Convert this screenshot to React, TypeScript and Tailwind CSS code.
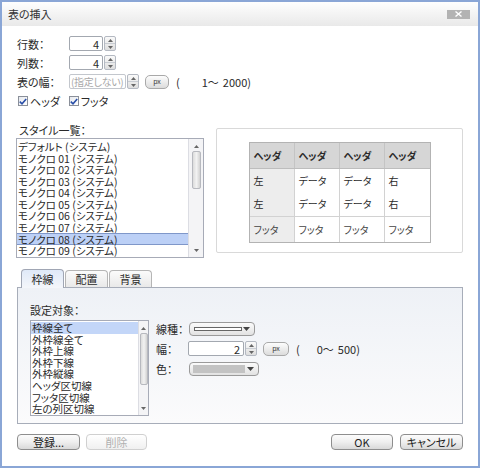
import React from "react";

const Tri = ({ down }: { down?: boolean }) => (
  <svg width="5" height="3" viewBox="0 0 5 3">
    <path d={down ? "M0 0H5L2.5 3z" : "M2.5 0L5 3H0z"} fill="#666" />
  </svg>
);

const Arrow = () => (
  <svg width="7" height="4" viewBox="0 0 7 4">
    <path d="M0 0H7L3.5 4z" fill="#444" />
  </svg>
);

function SpinButtons() {
  return (
    <div className="ml-px flex w-[12px] flex-col overflow-hidden rounded-[2px] border border-[#b4b9c2] bg-gradient-to-b from-[#fafafa] to-[#dedede]">
      <div className="flex flex-1 items-center justify-center border-b border-[#c8ccd2]">
        <Tri />
      </div>
      <div className="flex flex-1 items-center justify-center">
        <Tri down />
      </div>
    </div>
  );
}

function PxButton({ w }: { w: string }) {
  return (
    <div
      className={`flex h-[14px] items-center justify-center rounded-[5px] border border-[#a9a9a9] bg-gradient-to-b from-[#fdfdfd] to-[#dcdcdc] text-[7px] leading-none text-[#333] ${w}`}
    >
      px
    </div>
  );
}

function Check({ label }: { label: string }) {
  return (
    <div className="flex items-center">
      <div className="flex h-[10px] w-[10px] items-center justify-center border border-[#8a8f99] bg-gradient-to-br from-[#e6e9ee] to-white">
        <svg width="8" height="7" viewBox="0 0 8 7">
          <path d="M0.8 3.6L3 5.8L7.2 1" stroke="#2a4fa8" strokeWidth="1.6" fill="none" />
        </svg>
      </div>
      <span className="ml-[2px]">{label}</span>
    </div>
  );
}

function Scrollbar({ w, thumbTop, thumbH, thumbW }: { w: string; thumbTop: string; thumbH: string; thumbW: string }) {
  return (
    <div className={`flex flex-col items-center border-l border-[#dcdde3] bg-[#f4f4f6] ${w}`}>
      <div className="mt-[4px] flex h-[6px] items-center">
        <Tri />
      </div>
      <div
        className={`rounded-[2px] border border-[#b7b9bf] bg-gradient-to-r from-[#dcdcdc] via-[#f2f2f2] to-[#d2d2d2] ${thumbTop} ${thumbH} ${thumbW}`}
      />
      <div className="flex-1" />
      <div className="mb-[4px] flex h-[6px] items-center">
        <Tri down />
      </div>
    </div>
  );
}

function Btn({ label, disabled, w }: { label: string; disabled?: boolean; w: string }) {
  return (
    <div
      className={`flex h-[16px] items-center justify-center rounded-[4px] border ${
        disabled
          ? "border-[#d0d0d0] bg-gradient-to-b from-white to-[#f0f0f0] text-[#b0b0b0]"
          : "border-[#8e8e8e] bg-gradient-to-b from-[#fcfcfc] via-[#efefef] to-[#d9d9d9] text-[#222]"
      } ${w}`}
    >
      {label}
    </div>
  );
}

const styles = [
  "デフォルト (システム)",
  "モノクロ 01 (システム)",
  "モノクロ 02 (システム)",
  "モノクロ 03 (システム)",
  "モノクロ 04 (システム)",
  "モノクロ 05 (システム)",
  "モノクロ 06 (システム)",
  "モノクロ 07 (システム)",
  "モノクロ 08 (システム)",
  "モノクロ 09 (システム)",
];

const targets = ["枠線全て", "外枠線全て", "外枠上線", "外枠下線", "外枠縦線", "ヘッダ区切線", "フッタ区切線", "左の列区切線"];

export default function App() {
  return (
    <div className="flex h-[468px] w-[480px] flex-col overflow-hidden border-2 border-[#8aa6d6] bg-white font-['Noto_Sans_CJK_JP',sans-serif] text-[11px] leading-[12px] text-[#2a2a2a] [font-feature-settings:'palt']">
      {/* title bar */}
      <div className="flex h-[24px] items-center justify-between bg-gradient-to-b from-[#fefefe] to-[#e9e9e9] pl-[6px] pr-[8px]">
        <span className="text-[#333]">表の挿入</span>
        <div className="flex h-[9px] w-[23px] items-center justify-center bg-[#b3b3b3]">
          <svg width="7" height="6" viewBox="0 0 7 6">
            <path d="M0.5 0.5L6.5 5.5M6.5 0.5L0.5 5.5" stroke="white" strokeWidth="1.4" />
          </svg>
        </div>
      </div>

      {/* body */}
      <div className="flex flex-1 flex-col px-[15px] pt-[10px]">
        {/* rows */}
        <div className="flex flex-col gap-[4px]">
          <div className="flex h-[15px] items-center">
            <span className="w-[52px]">行数：</span>
            <div className="flex h-[15px]">
              <div className="flex w-[34px] items-center justify-end rounded-[2px] border border-[#a3a8b0] bg-white pr-[3px]">4</div>
              <SpinButtons />
            </div>
          </div>
          <div className="flex h-[15px] items-center">
            <span className="w-[52px]">列数：</span>
            <div className="flex h-[15px]">
              <div className="flex w-[34px] items-center justify-end rounded-[2px] border border-[#a3a8b0] bg-white pr-[3px]">4</div>
              <SpinButtons />
            </div>
          </div>
          <div className="flex h-[15px] items-center">
            <span className="w-[52px]">表の幅：</span>
            <div className="flex h-[15px]">
              <div className="flex w-[57px] items-center overflow-hidden whitespace-nowrap rounded-[2px] border border-[#c3c7cd] bg-white pl-px text-[10px] tracking-[-0.3px] text-[#a8a8a8]">
                (指定しない)
              </div>
              <SpinButtons />
            </div>
            <div className="ml-[6px]">
              <PxButton w="w-[24px]" />
            </div>
            <span className="ml-[7px]">(</span>
            <span className="ml-[22px]">1～</span>
            <span className="ml-[4px]">2000)</span>
          </div>
        </div>

        <div className="ml-[1px] mt-[6px] flex h-[12px] items-center gap-[9px]">
          <Check label="ヘッダ" />
          <Check label="フッタ" />
        </div>

        {/* style section */}
        <div className="mt-[17px] flex">
          <div className="flex flex-col">
            <span className="ml-[2px] h-[12px]">スタイル一覧：</span>
            <div className="mt-[2px] flex h-[120px] w-[188px] -ml-px border border-[#a7abb7] bg-white">
              <div className="flex flex-1 flex-col overflow-hidden pt-[2px]">
                {styles.map((s, i) => (
                  <div
                    key={s}
                    className={`h-[11.5px] shrink-0 whitespace-nowrap pl-px text-[10.5px] leading-[11.5px] ${
                      i === 8 ? "border-y border-[#7f97c9] bg-[#bcd0f6]" : ""
                    }`}
                  >
                    {s}
                  </div>
                ))}
              </div>
              <Scrollbar w="w-[15px]" thumbTop="mt-[2px]" thumbH="h-[38px]" thumbW="w-[9px]" />
            </div>
          </div>

          <div className="ml-[12px] mt-[4px] flex h-[125px] w-[247px] justify-center rounded-[2px] border border-[#d9d9d9] bg-white pt-[13px]">
            <div className="h-[101px] w-[182px] border border-[#b3b3b3] [&_div]:leading-[12px]">
              <div className="flex h-[26px] border-b border-[#bdbdbd] bg-[#d6d6d6] font-bold">
                {[0, 1, 2, 3].map((i) => (
                  <div key={i} className={`flex w-[45px] items-center pl-[4px] text-[10px] ${i < 3 ? "border-r border-[#c4c4c4]" : ""}`}>
                    ヘッダ
                  </div>
                ))}
              </div>
              <div className="flex h-[48px] border-b border-[#d2d2d2]">
                {[
                  ["左", "左"],
                  ["データ", "データ"],
                  ["データ", "データ"],
                  ["右", "右"],
                ].map((c, i) => (
                  <div
                    key={i}
                    className={`flex w-[45px] flex-col justify-around pl-[4px] text-[10px] ${i === 0 ? "bg-[#ededed]" : ""} ${
                      i < 3 ? "border-r border-[#d2d2d2]" : ""
                    }`}
                  >
                    <div>{c[0]}</div>
                    <div>{c[1]}</div>
                  </div>
                ))}
              </div>
              <div className="flex h-[25px] text-[#444]">
                {[0, 1, 2, 3].map((i) => (
                  <div
                    key={i}
                    className={`flex w-[45px] items-center pl-[4px] text-[10px] ${i === 0 ? "bg-[#ededed]" : ""} ${
                      i < 3 ? "border-r border-[#d2d2d2]" : ""
                    }`}
                  >
                    フッタ
                  </div>
                ))}
              </div>
            </div>
          </div>
        </div>

        {/* tabs */}
        <div className="ml-[4px] mt-[11px] flex h-[18px] items-end">
          <div className="relative z-10 flex h-[19px] w-[43px] -mb-px items-center justify-center rounded-t-[4px] border border-b-0 border-[#a0a6b4] bg-gradient-to-b from-[#dfe9f8] to-[#f4f6fa]">
            枠線
          </div>
          <div className="ml-px flex h-[17px] w-[43px] items-center justify-center rounded-t-[4px] border border-b-0 border-[#b5b5b5] bg-gradient-to-b from-[#fbfbfb] to-[#e9e9e9]">
            配置
          </div>
          <div className="ml-px flex h-[17px] w-[43px] items-center justify-center rounded-t-[4px] border border-b-0 border-[#b5b5b5] bg-gradient-to-b from-[#fbfbfb] to-[#e9e9e9]">
            背景
          </div>
        </div>
        <div className="flex h-[137px] flex-col border border-[#a7adb9] bg-gradient-to-b from-[#eef1f6] to-[#fbfbfc] pl-[12px] pt-[16px]">
          <span className="h-[12px]">設定対象：</span>
          <div className="mt-[4px] flex">
            <div className="flex h-[96px] w-[119px] border border-[#a7abb7] bg-white">
              <div className="flex flex-1 flex-col overflow-hidden pt-[1px]">
                {targets.map((t, i) => (
                  <div
                    key={t}
                    className={`h-[11.6px] shrink-0 whitespace-nowrap pl-px text-[10.5px] leading-[11.6px] ${i === 0 ? "bg-[#c3d6f8]" : ""}`}
                  >
                    {t}
                  </div>
                ))}
              </div>
              <Scrollbar w="w-[10px]" thumbTop="mt-[2px]" thumbH="h-[52px]" thumbW="w-[8px]" />
            </div>

            <div className="ml-[7px] mt-px flex flex-col gap-[5px]">
              <div className="flex h-[15px] items-center">
                <span className="w-[33px]">線種：</span>
                <div className="flex h-[14px] w-[66px] items-center rounded-[4px] border border-[#9a9a9a] bg-gradient-to-b from-[#fbfbfb] to-[#e2e2e2] pl-[4px] pr-[4px]">
                  <div className="h-[4px] w-[48px] border border-[#666] bg-white" />
                  <div className="ml-auto flex items-center">
                    <Arrow />
                  </div>
                </div>
              </div>
              <div className="flex h-[15px] items-center">
                <span className="w-[32px]">幅：</span>
                <div className="flex h-[15px]">
                  <div className="flex w-[56px] items-center justify-end rounded-[2px] border border-[#a3a8b0] bg-white pr-[3px]">2</div>
                  <SpinButtons />
                </div>
                <div className="ml-[6px]">
                  <PxButton w="w-[26px]" />
                </div>
                <span className="ml-[7px]">(</span>
                <span className="ml-[17px]">0～</span>
                <span className="ml-[4px]">500)</span>
              </div>
              <div className="flex h-[15px] items-center">
                <span className="w-[33px]">色：</span>
                <div className="flex h-[14px] w-[70px] items-center rounded-[4px] border border-[#9a9a9a] bg-gradient-to-b from-[#fbfbfb] to-[#e2e2e2] pl-[3px] pr-[4px]">
                  <div className="h-[8px] w-[52px] bg-[#c3c3c3]" />
                  <div className="ml-auto flex items-center">
                    <Arrow />
                  </div>
                </div>
              </div>
            </div>
          </div>
        </div>

        {/* buttons */}
        <div className="mt-[10px] flex items-center">
          <Btn label="登録..." w="w-[63px]" />
          <div className="ml-[6px]">
            <Btn label="削除" disabled w="w-[61px]" />
          </div>
          <div className="ml-auto">
            <Btn label="OK" w="w-[62px]" />
          </div>
          <div className="ml-[7px]">
            <Btn label="キャンセル" w="w-[63px]" />
          </div>
        </div>
      </div>
    </div>
  );
}
